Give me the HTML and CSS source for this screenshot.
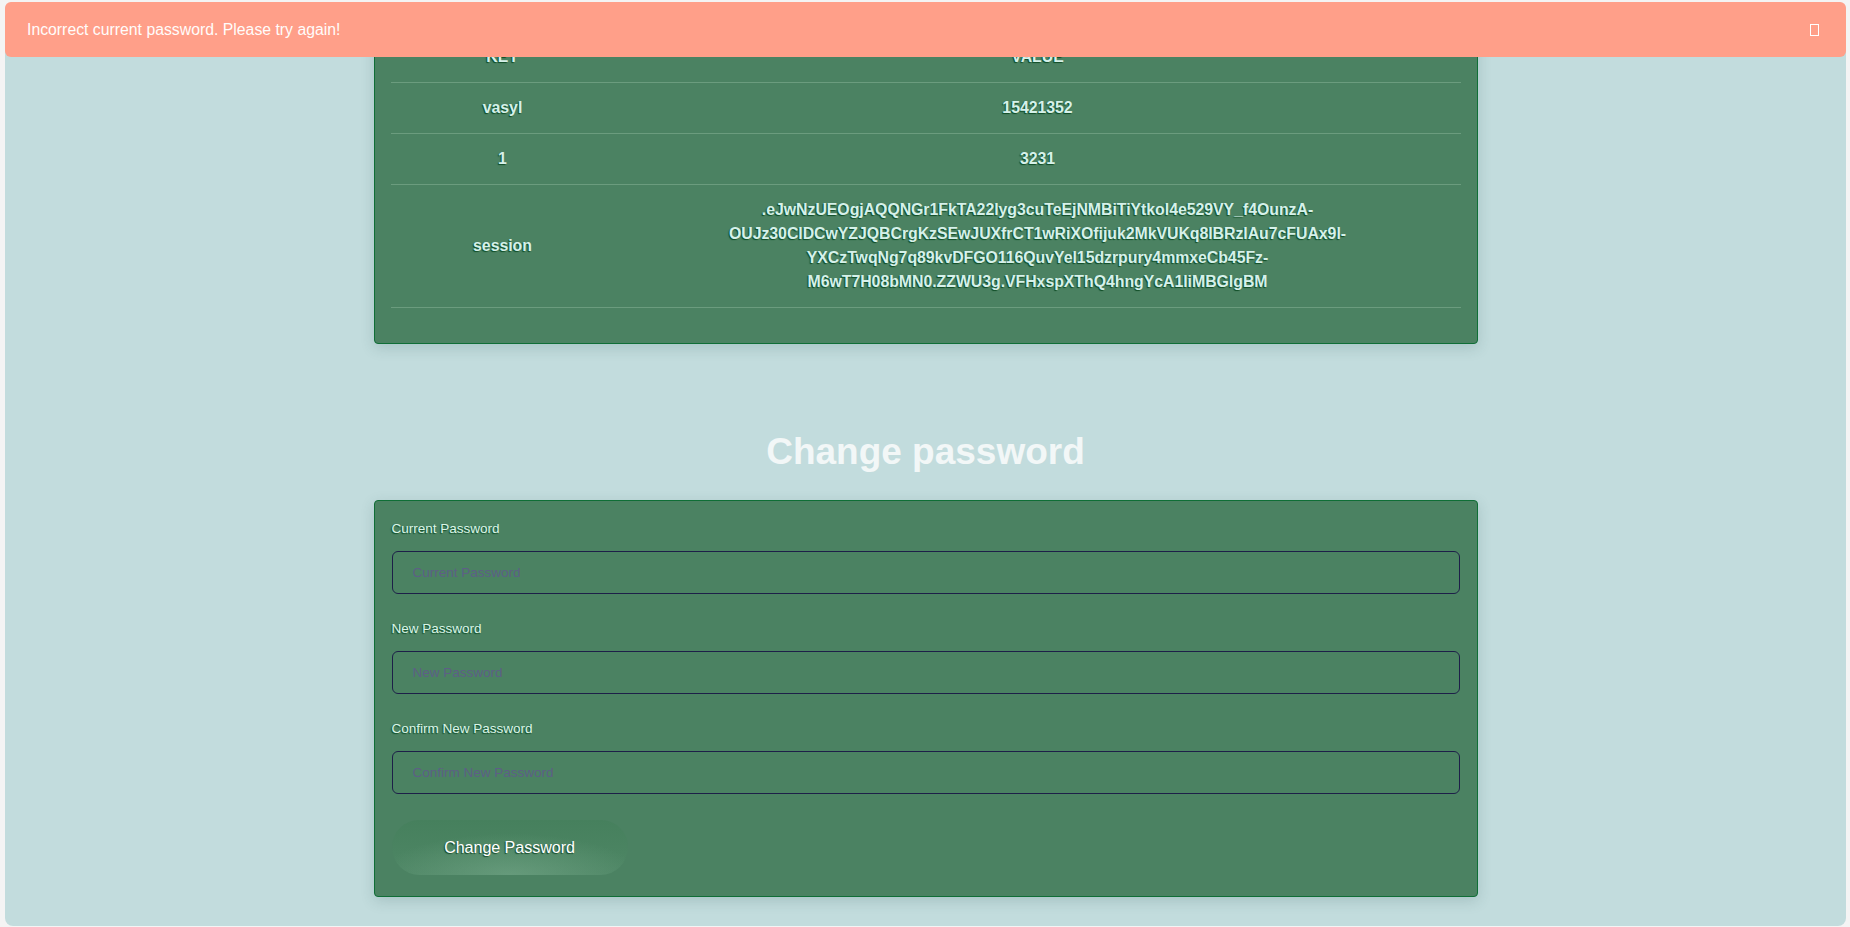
FILE: index.html
```html
<!DOCTYPE html>
<html lang="en">
<head>
<meta charset="utf-8">
<title>Profile</title>
<link rel="stylesheet" href="styles.css">
</head>
<body>
<div class="page">
  <div class="alert">
    <span class="alert-text">Incorrect current password. Please try again!</span>
    <span class="alert-close" aria-label="close"></span>
  </div>

  <section class="card table-card">
    <table class="kv">
      <colgroup><col class="col-key"><col class="col-val"></colgroup>
      <thead>
        <tr><th>KEY</th><th>VALUE</th></tr>
      </thead>
      <tbody>
        <tr><td>vasyl</td><td>15421352</td></tr>
        <tr><td>1</td><td>3231</td></tr>
        <tr><td>session</td><td>.eJwNzUEOgjAQQNGr1FkTA22lyg3cuTeEjNMBiTiYtkol4e529VY_f4OunzA-OUJz30ClDCwYZJQBCrgKzSEwJUXfrCT1wRiXOfijuk2MkVUKq8lBRzlAu7cFUAx9l-YXCzTwqNg7q89kvDFGO116QuvYel15dzrpury4mmxeCb45Fz-M6wT7H08bMN0.ZZWU3g.VFHxspXThQ4hngYcA1liMBGlgBM</td></tr>
      </tbody>
    </table>
  </section>

  <h2 class="title">Change password</h2>

  <form class="card form-card">
    <div class="group">
      <label class="label">Current Password</label>
      <input class="input" type="password" placeholder="Current Password">
    </div>
    <div class="group">
      <label class="label">New Password</label>
      <input class="input" type="password" placeholder="New Password">
    </div>
    <div class="group">
      <label class="label">Confirm New Password</label>
      <input class="input" type="password" placeholder="Confirm New Password">
    </div>
    <button type="button" class="btn">Change Password</button>
  </form>
</div>
</body>
</html>
```

FILE: styles.css
```css
html {
  background: #f4f4f4;
}
body {
  margin: 2px 4px 1px 5px;
  font-family: "Liberation Sans", Arial, sans-serif;
}
.page {
  min-height: calc(100vh - 3px);
  box-sizing: border-box;
  background: #c2dcdd;
  border-radius: 8px;
  overflow: hidden;
  display: flex;
  flex-direction: column;
  align-items: center;
  padding-top: 12px;
}
.alert {
  position: fixed;
  top: 2px;
  left: 5px;
  right: 4px;
  height: 55px;
  box-sizing: border-box;
  background: #ff9f89;
  border-radius: 6px;
  padding: 0 27px 0 22px;
  display: flex;
  align-items: center;
  justify-content: space-between;
  color: #ffffff;
  font-size: 15.8px;
  z-index: 10;
}
.alert-text {
  opacity: 0.97;
}
.alert-close {
  width: 7px;
  height: 10px;
  border: 1px solid #ffffff;
}
.card {
  width: 1104px;
  box-sizing: border-box;
  background: #4b8262;
  border: 1px solid #0f6e36;
  border-radius: 4px;
  box-shadow: 0 4px 14px rgba(40, 80, 80, 0.18);
}
.table-card {
  padding: 17px 16px;
}
.kv {
  width: 100%;
  border-collapse: collapse;
  table-layout: fixed;
  margin-bottom: 18px;
}
.col-key {
  width: 224px;
}
.kv th,
.kv td {
  padding: 13px 15px;
  line-height: 24px;
  font-size: 15.8px;
  font-weight: bold;
  text-align: center;
  color: #d6f1ea;
  text-shadow: -1px 1px 1px rgba(8, 70, 30, 0.9);
  border-bottom: 1px solid #6b9c7e;
  vertical-align: middle;
}
.title {
  margin: 86px 0 27px;
  font-size: 37px;
  line-height: 43px;
  font-weight: bold;
  color: #f2f7f7;
}
.form-card {
  padding: 19px 17px 21px;
  margin-bottom: 28px;
}
.group {
  margin-bottom: 26px;
}
.label {
  display: block;
  font-size: 13.5px;
  line-height: 17px;
  color: #daf5e8;
  text-shadow: -1px 1px 1px rgba(8, 70, 30, 0.85);
  margin-bottom: 14px;
}
.input {
  display: block;
  width: 100%;
  height: 43px;
  box-sizing: border-box;
  border: 1px solid #1d1f48;
  border-radius: 6px;
  background: transparent;
  padding: 0 20px;
  font-family: "Liberation Sans", Arial, sans-serif;
  font-size: 13.5px;
  color: #e0f0ea;
  outline: none;
}
.input::placeholder {
  color: #5d5f86;
}
.btn {
  display: block;
  width: 236px;
  height: 55px;
  border: none;
  border-radius: 28px;
  font-family: "Liberation Sans", Arial, sans-serif;
  font-size: 16px;
  color: #ffffff;
  text-shadow: -1px 1px 1px rgba(8, 60, 25, 0.8);
  background:
    radial-gradient(ellipse 55% 75% at 50% 100%, rgba(120, 170, 140, 0.55), rgba(120, 170, 140, 0) 100%),
    linear-gradient(180deg, #46805d 0%, #4b8462 60%, #4f8766 100%);
  cursor: pointer;
}
```
